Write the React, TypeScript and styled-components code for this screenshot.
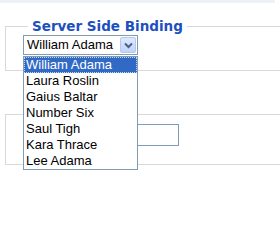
import styled, { createGlobalStyle } from 'styled-components';

const GlobalStyle = createGlobalStyle`
  html {
    overflow: hidden;
  }
  body {
    margin: 0;
    padding: 0;
    min-height: 241px;
    background: #fff;
    font-family: "Liberation Sans", Arial, sans-serif;
    font-size: 13px;
    color: #000;
  }
`;

const pilots = [
  'William Adama',
  'Laura Roslin',
  'Gaius Baltar',
  'Number Six',
  'Saul Tigh',
  'Kara Thrace',
  'Lee Adama',
];

const TopStrip = styled.div`
  height: 3px;
  margin-right: 5px;
  background: #eef2f7;
`;

const Page = styled.div`
  width: 280px;
  box-sizing: border-box;
  padding-left: 5px;
`;

const Fieldset = styled.fieldset<{ $top: number; $padTop: number; $padBottom: number }>`
  margin: ${(p) => p.$top}px 0 0 0;
  padding: ${(p) => p.$padTop}px 0 ${(p) => p.$padBottom}px 17px;
  border: 1px solid #d9d9d9;
  border-right: none;
  min-width: 0;
`;

const Legend = styled.legend`
  margin-left: 5px;
  padding: 0 4px;
  font-family: "DejaVu Sans", Verdana, sans-serif;
  font-weight: bold;
  font-size: 13.5px;
  line-height: 16px;
  color: #1c4fbf;
`;

const SelectWrap = styled.div`
  position: relative;
  width: 115px;
`;

const SelectBox = styled.div`
  box-sizing: border-box;
  height: 20px;
  border: 1px solid #7f9db9;
  display: flex;
  align-items: center;
  justify-content: space-between;
  padding: 0 1px 0 3px;
  background: #fff;
`;

const SelectText = styled.span`
  font-size: 13px;
  line-height: 16px;
`;

const ArrowButton = styled.span`
  box-sizing: border-box;
  width: 16px;
  height: 16px;
  border: 1px solid #b3c8f0;
  border-radius: 2px;
  background: linear-gradient(#dfe9fd, #c1d3fb);
  display: flex;
  align-items: center;
  justify-content: center;
`;

const DropList = styled.ul`
  position: absolute;
  top: 21px;
  left: 0;
  box-sizing: border-box;
  width: 115px;
  margin: 0;
  padding: 0;
  list-style: none;
  border: 1px solid #7f9db9;
  background: #fff;
  z-index: 2;
`;

const DropItem = styled.li<{ $active?: boolean }>`
  height: 16px;
  line-height: 16px;
  padding-left: 2px;
  font-size: 13px;
  background: ${(p) => (p.$active ? '#316ac5' : 'transparent')};
  color: ${(p) => (p.$active ? '#fff' : '#000')};
  outline: ${(p) => (p.$active ? '1px dotted #c9d6ee' : 'none')};
  outline-offset: -1px;
`;

const TextInput = styled.input`
  box-sizing: border-box;
  display: block;
  width: 156px;
  height: 22px;
  margin: 0;
  border: 1px solid #7f9db9;
  padding: 2px 3px;
  font-family: "Liberation Sans", Arial, sans-serif;
  font-size: 13px;
`;

const Chevron = () => (
  <svg width="9" height="7" viewBox="0 0 9 7">
    <path d="M1 1.5 L4.5 5 L8 1.5" fill="none" stroke="#4d6185" strokeWidth="2" />
  </svg>
);

export default function App() {
  return (
    <>
      <GlobalStyle />
      <TopStrip />
      <Page>
        <Fieldset $top={15} $padTop={1} $padBottom={15}>
          <Legend>Server Side Binding</Legend>
          <SelectWrap>
            <SelectBox>
              <SelectText>William Adama</SelectText>
              <ArrowButton>
                <Chevron />
              </ArrowButton>
            </SelectBox>
            <DropList>
              {pilots.map((name, i) => (
                <DropItem key={name} $active={i === 0}>
                  {name}
                </DropItem>
              ))}
            </DropList>
          </SelectWrap>
        </Fieldset>
        <Fieldset $top={43} $padTop={9} $padBottom={18}>
          <TextInput type="text" />
        </Fieldset>
      </Page>
    </>
  );
}
